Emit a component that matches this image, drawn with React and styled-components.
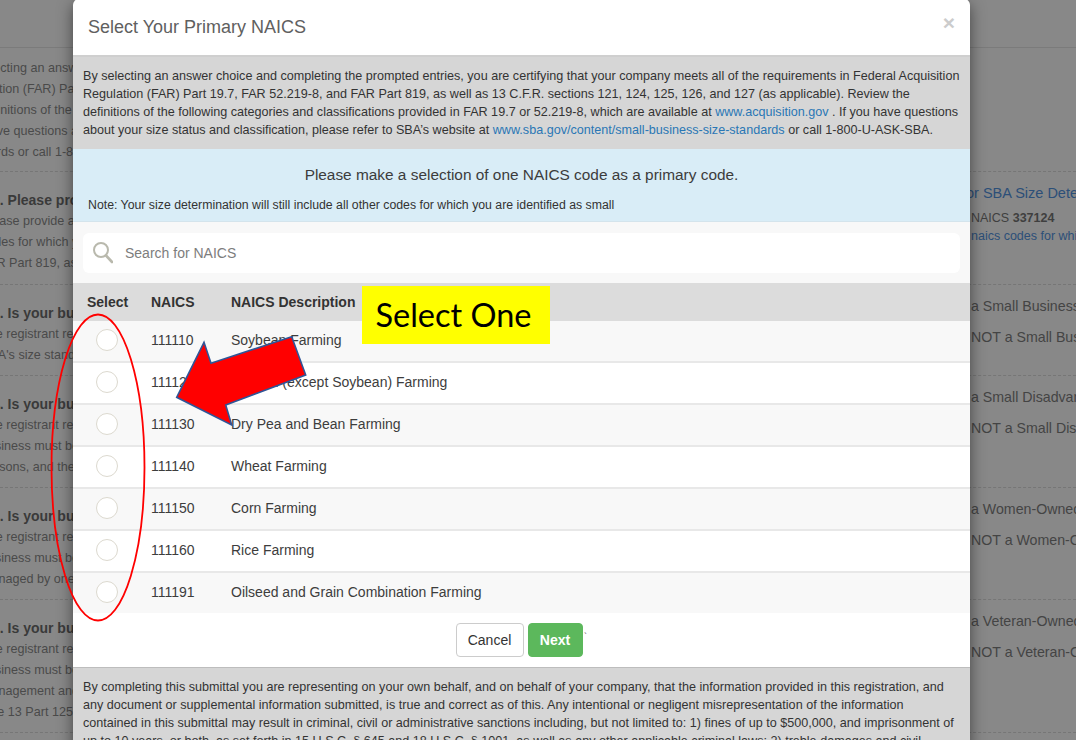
import React from "react";
import styled, { createGlobalStyle } from "styled-components";

const GlobalStyle = createGlobalStyle`
  html, body {
    margin: 0;
    padding: 0;
    height: 740px;
    overflow: hidden;
    background: #888888;
    font-family: "Liberation Sans", Arial, sans-serif;
  }
`;

const Page = styled.div`
  position: relative;
  width: 1076px;
  height: 740px;
  overflow: hidden;
  background: #888888;
  padding-top: 48px;
  box-sizing: border-box;
`;

const BackgroundList = styled.div`
  display: flex;
  flex-direction: column;
  border-top: 1px solid #7b7b7b;
  margin-top: -1px;
`;

const BackgroundRow = styled.div`
  display: flex;
  box-sizing: border-box;
  height: ${(p) => p.$height}px;
  border-bottom: 1px dashed #767676;
  padding-top: ${(p) => (p.$first ? 10 : 18)}px;
`;

const BackgroundLeft = styled.div`
  width: 971px;
  flex: none;
  margin-left: ${(p) => (p.$first ? -41 : 0)}px;
  font-size: 12.6px;
  line-height: 21px;
  color: #4a4a4a;
  white-space: nowrap;
`;

const BackgroundHead = styled.div`
  margin-left: -8px;
  font-weight: 700;
  color: #3a3a3a;
  font-size: 14px;
`;

const BackgroundLine = styled.div`
  margin-left: ${(p) => (p.$first ? 0 : -19)}px;
`;

const BackgroundRight = styled.div`
  margin-top: -7px;
  font-size: 14.2px;
  line-height: 21px;
  color: #444444;
  white-space: nowrap;
  display: flex;
  flex-direction: column;
  gap: 10px;
`;

const SizeBlock = styled.div`
  margin-top: -7px;
  display: flex;
  flex-direction: column;
  white-space: nowrap;
  color: #3f3f3f;
  font-size: 12.5px;
`;

const SizeTitle = styled.div`
  margin-left: -5px;
  font-size: 14.5px;
  line-height: 21px;
  color: #2c4f78;
  margin-bottom: 5px;
`;

const SizeText = styled.div`
  line-height: 18px;
  color: ${(p) => p.$color || "#3f3f3f"};
`;

const Modal = styled.div`
  position: absolute;
  top: -1px;
  left: 73px;
  width: 897px;
  background: #ffffff;
  border-radius: 6px 6px 0 0;
  box-shadow: 0 5px 15px rgba(0, 0, 0, 0.5);
  color: #333333;
`;

const ModalHeader = styled.div`
  display: flex;
  align-items: center;
  justify-content: space-between;
  box-sizing: border-box;
  height: 58px;
  padding: 1px 15px 0;
  border-bottom: 2px solid #cfcfcf;
`;

const ModalTitle = styled.h4`
  margin: 0;
  font-size: 18px;
  font-weight: 400;
  color: #606060;
`;

const CloseButton = styled.span`
  font-size: 21px;
  font-weight: 700;
  line-height: 1;
  color: #cccccc;
  margin-top: -10px;
`;

const Notice = styled.div`
  background: #d6d6d6;
  padding: ${(p) => p.$padding};
  font-size: 12.6px;
  line-height: 18px;
  color: #333333;
  white-space: nowrap;
`;

const NoticeLink = styled.a`
  color: #2a77b5;
  text-decoration: none;
`;

const InfoBanner = styled.div`
  box-sizing: border-box;
  height: 73px;
  background: #d9edf7;
  border-bottom: 1px solid #d4e4ec;
  padding: 16px 15px 0;
`;

const InfoTitle = styled.div`
  text-align: center;
  font-size: 15.4px;
  line-height: 20px;
  color: #3c3c3c;
`;

const InfoNote = styled.div`
  margin-top: 11px;
  font-size: 12.3px;
  line-height: 18px;
  color: #333333;
`;

const SearchArea = styled.div`
  box-sizing: border-box;
  height: 61px;
  background: #f8f8f8;
  padding: 11px 10px 10px;
`;

const SearchBox = styled.div`
  display: flex;
  align-items: center;
  gap: 12px;
  height: 40px;
  padding-left: 10px;
  border-radius: 6px;
  background: #ffffff;
`;

const SearchText = styled.span`
  font-size: 14px;
  color: #7d7d7d;
`;

const TableRow = styled.div`
  display: grid;
  grid-template-columns: 78px 80px 1fr;
  align-items: center;
  box-sizing: border-box;
  height: ${(p) => (p.$last ? 40 : 42)}px;
  background: ${(p) => (p.$odd ? "#f8f8f8" : "#ffffff")};
  border-bottom: ${(p) => (p.$last ? "none" : "2px solid #e8e8e8")};
  font-size: 14px;
  color: #3d3d3d;
  padding-bottom: ${(p) => (p.$last ? 3 : 2)}px;
`;

const TableHead = styled.div`
  display: grid;
  grid-template-columns: 78px 80px 1fr;
  align-items: center;
  box-sizing: border-box;
  height: 38px;
  background: #dcdcdc;
  font-size: 14px;
  font-weight: 700;
  color: #333333;
  padding-bottom: 1px;
`;

const SelectHead = styled.span`
  padding-left: 14px;
`;

const RadioCell = styled.div`
  display: flex;
  justify-content: flex-start;
  padding-left: 23px;
`;

const Radio = styled.span`
  display: block;
  box-sizing: border-box;
  width: 22px;
  height: 22px;
  border-radius: 50%;
  border: 1px solid #dcd9cf;
  background: #ffffff;
`;

const Actions = styled.div`
  position: relative;
  display: flex;
  justify-content: center;
  align-items: flex-start;
  gap: 4px;
  box-sizing: border-box;
  height: 55px;
  padding: 10px 5px 0 0;
  background: #ffffff;
  border-bottom: 1px solid #bdbdbd;
`;

const Button = styled.button`
  box-sizing: border-box;
  height: 34px;
  padding: 0;
  width: ${(p) => p.$width}px;
  border-radius: 4px;
  font-family: inherit;
  font-size: 14px;
  font-weight: ${(p) => (p.$primary ? 700 : 400)};
  color: ${(p) => (p.$primary ? "#ffffff" : "#333333")};
  background: ${(p) => (p.$primary ? "#5cb85c" : "#ffffff")};
  border: 1px solid ${(p) => (p.$primary ? "#5cb85c" : "#cccccc")};
`;

const Tick = styled.span`
  position: absolute;
  left: 511px;
  top: 18px;
  font-size: 9px;
  line-height: 10px;
  color: #555555;
`;

const LabelTag = styled.div`
  position: absolute;
  left: 362px;
  top: 286px;
  width: 188px;
  height: 58px;
  display: flex;
  align-items: center;
  justify-content: center;
  background: #ffff00;
  color: #000000;
  font-family: Lato, "Open Sans", sans-serif;
  font-size: 32.5px;
  padding: 0 5px 2px 0;
  box-sizing: border-box;
`;

const Overlay = styled.svg`
  position: absolute;
  left: 0;
  top: 0;
  pointer-events: none;
`;

const ROWS = [
  ["111110", "Soybean Farming"],
  ["111120", "Oilseed (except Soybean) Farming"],
  ["111130", "Dry Pea and Bean Farming"],
  ["111140", "Wheat Farming"],
  ["111150", "Corn Farming"],
  ["111160", "Rice Farming"],
  ["111191", "Oilseed and Grain Combination Farming"],
];

const SECTIONS = [
  {
    height: 113,
    head: "2. Please provide additional information",
    lines: ["Please provide all", "codes for which you", "FAR Part 819, as"],
    size: true,
  },
  {
    height: 91,
    head: "3. Is your business small",
    lines: ["The registrant represents", "SBA's size standards"],
    right: ["a Small Business", "NOT a Small Business"],
  },
  {
    height: 112,
    head: "4. Is your business small",
    lines: ["The registrant represents", "business must be", "persons, and their"],
    right: ["a Small Disadvantaged", "NOT a Small Disadvantaged"],
  },
  {
    height: 112,
    head: "5. Is your business women",
    lines: ["The registrant represents", "business must be", "managed by one"],
    right: ["a Women-Owned", "NOT a Women-Owned"],
  },
  {
    height: 133,
    head: "6. Is your business veteran",
    lines: ["The registrant represents", "business must be", "management and", "Title 13 Part 125"],
    right: ["a Veteran-Owned", "NOT a Veteran-Owned"],
  },
];

const SearchIcon = () => (
  <svg width="20" height="22" viewBox="0 0 20 22" fill="none" stroke="#b9b9ad" strokeWidth="2">
    <circle cx="8" cy="8" r="7" />
    <path d="M13 13.5 L19 20" strokeWidth="2.6" strokeLinecap="round" />
  </svg>
);

const Background = () => (
  <BackgroundList>
    <BackgroundRow $height={124} $first>
      <BackgroundLeft $first>
        <BackgroundLine $first>By selecting an answer choice</BackgroundLine>
        <BackgroundLine $first>Regulation (FAR) Part 19.7</BackgroundLine>
        <BackgroundLine $first>the definitions of the following</BackgroundLine>
        <BackgroundLine $first>you have questions about</BackgroundLine>
        <BackgroundLine $first>standards or call 1-800-U-ASK-SBA</BackgroundLine>
      </BackgroundLeft>
    </BackgroundRow>
    {SECTIONS.map((section) => (
      <BackgroundRow key={section.head} $height={section.height}>
        <BackgroundLeft>
          <BackgroundHead>{section.head}</BackgroundHead>
          {section.lines.map((line) => (
            <BackgroundLine key={line}>{line}</BackgroundLine>
          ))}
        </BackgroundLeft>
        {section.size ? (
          <SizeBlock>
            <SizeTitle>or SBA Size Determination</SizeTitle>
            <SizeText>
              NAICS <b>337124</b>
            </SizeText>
            <SizeText $color="#2c4f78">naics codes for which</SizeText>
          </SizeBlock>
        ) : (
          <BackgroundRight>
            {section.right.map((line) => (
              <div key={line}>{line}</div>
            ))}
          </BackgroundRight>
        )}
      </BackgroundRow>
    ))}
  </BackgroundList>
);

const App = () => {
  return (
    <Page>
      <GlobalStyle />
      <Background />
      <Modal>
        <ModalHeader>
          <ModalTitle>Select Your Primary NAICS</ModalTitle>
          <CloseButton>×</CloseButton>
        </ModalHeader>
        <Notice $padding="10px 10px 10px">
          By selecting an answer choice and completing the prompted entries, you are certifying that your company meets all of the requirements in Federal Acquisition
          <br />
          Regulation (FAR) Part 19.7, FAR 52.219-8, and FAR Part 819, as well as 13 C.F.R. sections 121, 124, 125, 126, and 127 (as applicable). Review the
          <br />
          definitions of the following categories and classifications provided in FAR 19.7 or 52.219-8, which are available at{" "}
          <NoticeLink>www.acquisition.gov</NoticeLink> . If you have questions
          <br />
          about your size status and classification, please refer to SBA’s website at{" "}
          <NoticeLink>www.sba.gov/content/small-business-size-standards</NoticeLink> or call 1-800-U-ASK-SBA.
        </Notice>
        <InfoBanner>
          <InfoTitle>Please make a selection of one NAICS code as a primary code.</InfoTitle>
          <InfoNote>Note: Your size determination will still include all other codes for which you are identified as small</InfoNote>
        </InfoBanner>
        <SearchArea>
          <SearchBox>
            <SearchIcon />
            <SearchText>Search for NAICS</SearchText>
          </SearchBox>
        </SearchArea>
        <TableHead>
          <SelectHead>Select</SelectHead>
          <span>NAICS</span>
          <span>NAICS Description</span>
        </TableHead>
        {ROWS.map(([code, description], i) => (
          <TableRow key={code} $odd={i % 2 === 0} $last={i === ROWS.length - 1}>
            <RadioCell>
              <Radio />
            </RadioCell>
            <span>{code}</span>
            <span>{description}</span>
          </TableRow>
        ))}
        <Actions>
          <Button $width={68}>Cancel</Button>
          <Button $width={55} $primary>
            Next
          </Button>
          <Tick>`</Tick>
        </Actions>
        <Notice $padding="10px 10px 0">
          By completing this submittal you are representing on your own behalf, and on behalf of your company, that the information provided in this registration, and
          <br />
          any document or supplemental information submitted, is true and correct as of this. Any intentional or negligent misrepresentation of the information
          <br />
          contained in this submittal may result in criminal, civil or administrative sanctions including, but not limited to: 1) fines of up to $500,000, and imprisonment of
          <br />
          up to 10 years, or both, as set forth in 15 U.S.C. § 645 and 18 U.S.C. § 1001, as well as any other applicable criminal laws; 2) treble damages and civil
        </Notice>
      </Modal>
      <LabelTag>Select One</LabelTag>
      <Overlay width="1076" height="740" viewBox="0 0 1076 740">
        <ellipse cx="98" cy="467.5" rx="46.5" ry="153" fill="none" stroke="#ff0000" strokeWidth="1.8" />
        <polygon
          points="176.7,397.3 204,342.3 211,363.3 291.7,336.7 305.7,375 225.7,405 231.7,425"
          fill="#ff0000"
          stroke="#2f5597"
          strokeWidth="1.6"
          strokeLinejoin="miter"
        />
      </Overlay>
    </Page>
  );
};

export default App;
